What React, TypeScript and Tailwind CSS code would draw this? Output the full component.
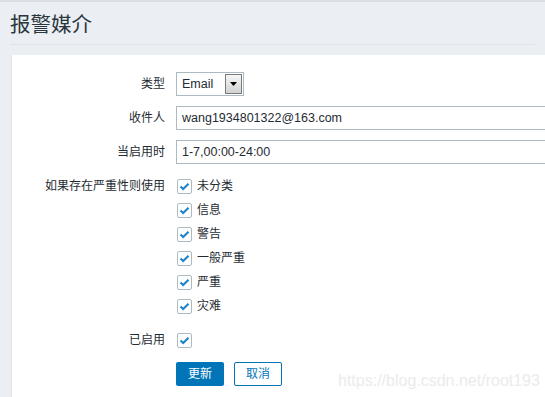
const FONT = { fontFamily: '"Liberation Sans", Arial, "Noto Sans CJK SC", sans-serif' };

function Check() {
  return (
    <span className="flex h-[15px] w-[15px] shrink-0 items-center justify-center rounded-[2px] border border-[#acbbc2] bg-white">
      <svg width="11" height="9" viewBox="0 0 11 9" aria-hidden="true">
        <path d="M1.5 4.5 L4.2 7 L9.5 1.8" fill="none" stroke="#1e87c8" strokeWidth="2.2" />
      </svg>
    </span>
  );
}

function Row({ label, children, top }: { label: string; children: React.ReactNode; top?: boolean }) {
  return (
    <div className={`mb-[10px] flex ${top ? "items-start" : "items-center"}`}>
      <div className="w-[153px] shrink-0 text-right text-[12px] leading-[24px] text-[#1f2c33]">{label}</div>
      <div className="ml-[11px]">{children}</div>
    </div>
  );
}

const severities = ["未分类", "信息", "警告", "一般严重", "严重", "灾难"];

export default function App() {
  return (
    <div
      style={FONT}
      className="relative h-[397px] overflow-hidden border-t-2 border-[#d9dee3] bg-[#ebeef2] text-[#1f2c33]"
    >
      <div className="mx-[10px] h-[43px] border-b border-[#dde3e7] pt-[10px]">
        <h1 className="text-[20.5px] leading-[26px] font-normal text-[#2a363d]">报警媒介</h1>
      </div>

      <div className="ml-[11px] mt-[10px] h-[400px] w-[600px] border-l border-[#dde3e7] bg-white pt-[17px]">
        <Row label="类型">
          <div className="flex h-[24px] w-[68px] items-center border border-[#acbbc2] bg-white">
            <span className="flex-1 pl-[5px] text-[12.5px]">Email</span>
            <span className="mr-[1px] flex h-[20px] w-[17px] items-center justify-center border border-[#7a7a7a] bg-gradient-to-b from-[#f6f6f6] to-[#d2d2d2]">
              <svg width="7" height="4" viewBox="0 0 7 4" aria-hidden="true">
                <path d="M0 0 H7 L3.5 4 Z" fill="#000" />
              </svg>
            </span>
          </div>
        </Row>
        <Row label="收件人">
          <div className="flex h-[24px] w-[420px] items-center border border-[#acbbc2] px-[5px] text-[12.5px]">
            wang1934801322@163.com
          </div>
        </Row>
        <Row label="当启用时">
          <div className="flex h-[24px] w-[420px] items-center border border-[#acbbc2] px-[5px] text-[12.5px]">
            1-7,00:00-24:00
          </div>
        </Row>
        <Row label="如果存在严重性则使用" top>
          <div className="flex flex-col">
            {severities.map((s) => (
              <div key={s} className="flex h-[24px] items-center pl-[1px]">
                <Check />
                <span className="ml-[5px] text-[12px]">{s}</span>
              </div>
            ))}
          </div>
        </Row>
        <Row label="已启用">
          <div className="flex h-[24px] items-center pl-[1px]">
            <Check />
          </div>
        </Row>
        <div className="ml-[164px] flex gap-[10px]">
          <button className="h-[24px] w-[48px] rounded-[2px] bg-[#0275b8] text-[12px] text-white">更新</button>
          <button className="h-[24px] w-[48px] rounded-[2px] border border-[#0275b8] bg-white text-[12px] text-[#0275b8]">
            取消
          </button>
        </div>
      </div>

      <div className="pointer-events-none absolute left-[338px] top-[367px] text-[16px] text-[#ebebeb]">
        https://blog.csdn.net/root193
      </div>
    </div>
  );
}
